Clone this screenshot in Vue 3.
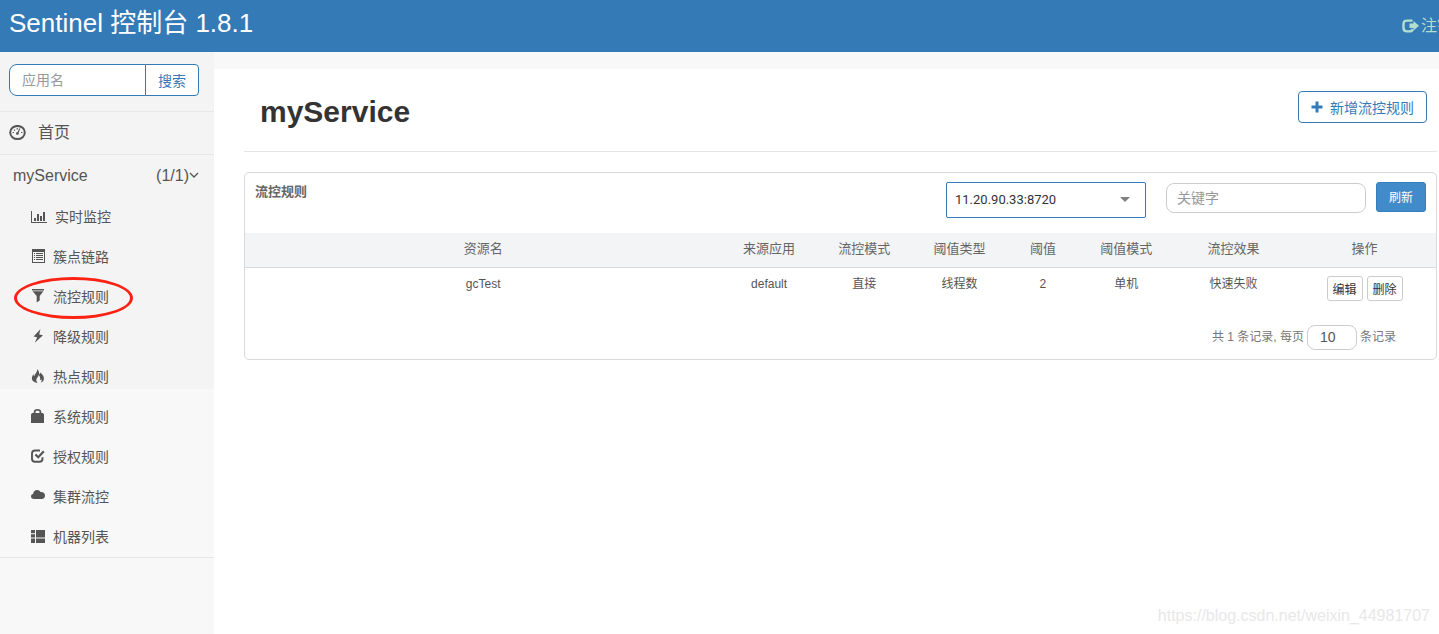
<script setup>
import { ref } from 'vue'

const menu = [
  { icon: 'chart', label: '实时监控' },
  { icon: 'list', label: '簇点链路' },
  { icon: 'filter', label: '流控规则', marked: true },
  { icon: 'flash', label: '降级规则' },
  { icon: 'fire', label: '热点规则' },
  { icon: 'lock', label: '系统规则' },
  { icon: 'check', label: '授权规则' },
  { icon: 'cloud', label: '集群流控' },
  { icon: 'machines', label: '机器列表' }
]

const columns = ['资源名', '来源应用', '流控模式', '阈值类型', '阈值', '阈值模式', '流控效果', '操作']
const rules = [['gcTest', 'default', '直接', '线程数', '2', '单机', '快速失败']]

const appName = ref('')
const keyword = ref('')
const machine = ref('11.20.90.33:8720')
const pageSize = ref('10')
</script>

<template>
  <div class="page">
    <header class="topbar">
      <h1 class="brand">Sentinel 控制台 1.8.1</h1>
      <a class="logout" href="#">
        <svg width="17" height="14" viewBox="0 0 17 14" aria-hidden="true">
          <path d="M10.500 1.600H5C2.700 1.600 1.500 2.700 1.500 4.900v4.200c0 2.200 1.200 3.300 3.500 3.300h2.500c1.900 0 3-.8 3.200-2.400" fill="none" stroke="currentColor" stroke-width="2.400" />
          <path d="M11.500 2L17 6.700l-5.500 4.700V9H7.500V4.500h4z" fill="currentColor" />
        </svg>
        <span>注销</span>
      </a>
    </header>

    <div class="body">
      <aside class="sidebar">
        <form class="search" @submit.prevent>
          <input v-model="appName" class="search-input" type="text" placeholder="应用名" aria-label="应用名" />
          <button class="search-btn" type="submit">搜索</button>
        </form>
        <a class="home" href="#">
          <svg width="17" height="16" viewBox="0 0 17 16" aria-hidden="true">
            <ellipse cx="8.500" cy="7.500" rx="7.300" ry="6.600" fill="none" stroke="currentColor" stroke-width="2" />
            <path d="M8.100 9.400L10.800 3.600M3.600 7.500h1.400M12 7.500h1.400M5 4.600l1 1M8.200 3v1.400" stroke="currentColor" stroke-width="1.100" />
            <circle cx="8.400" cy="8.400" r="1.300" fill="currentColor" />
          </svg>
          <span>首页</span>
        </a>
        <a class="app" href="#">
          <span>myService</span>
          <span class="count">(1/1)
            <svg width="10" height="9" viewBox="0 0 10 9" aria-hidden="true"><path d="M1 1l4 4 4-4" fill="none" stroke="currentColor" stroke-width="1.300" /></svg>
          </span>
        </a>
        <nav>
          <ul class="menu">
            <li v-for="m in menu" :key="m.label">
              <a href="#" class="item">
                <svg v-if="m.icon === 'chart'" width="16" height="14" viewBox="0 0 16 14" fill="currentColor"><path d="M0 1h1v11h15v1H0zM3 8h2v3H3zM6 4h2v7H6zM9 6h2v5H9zM12 2h2v9h-2z" /></svg>
                <svg v-else width="14" height="16" viewBox="0 0 14 16" fill="currentColor">
                  <path v-if="m.icon === 'list'" fill-rule="evenodd" d="M1 0h13v14H1zM2 3v10h11V3zM3 4h1v1H3zM5 4h7v1H5zM3 6h1v1H3zM5 6h7v1H5zM3 8h1v1H3zM5 8h7v1H5zM3 10h1v1H3zM5 10h7v1H5z" />
                  <path v-else-if="m.icon === 'filter'" d="M1 0h12v1.500H1zM1.600 2.300h10.800L8.700 7v4.600L5.700 13.600V7z" />
                  <path v-else-if="m.icon === 'flash'" d="M9.400.3L2.600 7.500l3.600.7L3.800 13.800l8.200-7.500-3.800-.8z" />
                  <path v-else-if="m.icon === 'fire'" d="M6.200 0c1.500 1.800 2.300 3.600 1.900 5.400.8-.4 1-1 .9-2 2.400 1.500 4 3.700 3.900 6.100 0 2-1.200 3.600-3.300 4.300 1-1.200 1.300-2.400.8-3.900-.3.800-.8 1.100-1.400 1.200.6-2.200-.1-3.800-1.500-5-.1 2.200-2.200 2.900-2.200 5 0 1.100.5 1.900 1.300 2.700C3.700 13.500 1 12.200.9 9.500.8 7.800 1.700 6.500 2.500 5c.1 1.200.3 1.900.9 2.300C3.700 4.700 6.700 3.200 6.200 0z" />
                  <path v-else-if="m.icon === 'lock'" fill-rule="evenodd" d="M2.700 4V3C2.700 1 4.200 0 6.500 0s3.800 1 3.800 3v1h1.500L13 5.200V14H0V5.200L1.200 4zM4.500 4h4V3.200c0-1.100-.7-1.500-2-1.500s-2 .4-2 1.500z" />
                  <template v-else-if="m.icon === 'check'">
                    <path d="M9 1.500H4C2 1.500 1 2.500 1 4.500v5.200c0 2 1 3 3 3h4.500c2 0 3-1 3-3V8.200" fill="none" stroke="currentColor" stroke-width="1.900" />
                    <path d="M3.600 6.200l1.600-1.500 2 2L12 1.500 13.600 3 7.300 9.800z" />
                  </template>
                  <path v-else-if="m.icon === 'cloud'" d="M3 10C1 10 0 8.900 0 7.500 0 6.100.9 5.200 2.100 5 2.200 2.700 3.800 1 6 1c1.700 0 2.900.8 3.600 2.100C12 2.700 14 4.200 14 6.600 14 8.700 12.700 10 10.800 10z" />
                  <path v-else d="M0 1h4v3.300H0zM5 1h9v7.600H5zM0 5.300h4v3.300H0zM0 9.600h4V14H0zM5 9.600h9V14H5z" />
                </svg>
                <span>{{ m.label }}</span>
                <i v-if="m.marked" class="ring"></i>
              </a>
            </li>
          </ul>
        </nav>
      </aside>

      <main class="main">
        <div class="heading">
          <h2>myService</h2>
          <button class="add" type="button">
            <svg width="12" height="12" viewBox="0 0 12 12" fill="currentColor" aria-hidden="true"><path d="M4.500.5h3v4h4v3h-4v4h-3v-4h-4v-3h4z" /></svg>
            <span>新增流控规则</span>
          </button>
        </div>

        <section class="panel">
          <div class="tools">
            <h3>流控规则</h3>
            <div class="picker">
              <select v-model="machine" aria-label="机器">
                <option>11.20.90.33:8720</option>
              </select>
              <i class="caret"></i>
            </div>
            <input v-model="keyword" class="keyword" type="text" placeholder="关键字" aria-label="关键字" />
            <button class="refresh" type="button">刷新</button>
          </div>

          <table>
            <colgroup>
              <col class="c40" /><col class="c8" /><col class="c8" /><col class="c8" /><col class="c6" /><col class="c8" /><col class="c10" /><col class="c12" />
            </colgroup>
            <thead>
              <tr><th v-for="c in columns" :key="c" scope="col">{{ c }}</th></tr>
            </thead>
            <tbody>
              <tr v-for="r in rules" :key="r[0]">
                <td v-for="(v, i) in r" :key="i">{{ v }}</td>
                <td>
                  <div class="ops">
                    <button type="button">编辑</button>
                    <button type="button">删除</button>
                  </div>
                </td>
              </tr>
            </tbody>
          </table>

          <div class="pager">
            <label for="page-size">共 1 条记录, 每页</label>
            <input id="page-size" v-model="pageSize" type="text" />
            <span>条记录</span>
          </div>
        </section>
      </main>
    </div>
    <div class="watermark">https://blog.csdn.net/weixin_44981707</div>
  </div>
</template>

<style>
body {
  margin: 0;
  background: #fff;
}
</style>

<style scoped>
* {
  box-sizing: border-box;
}
.page {
  position: relative;
  display: flex;
  flex-direction: column;
  min-height: 100vh;
  overflow: hidden;
  font-family: "Liberation Sans", "Noto Sans CJK SC", sans-serif;
  font-size: 14px;
  line-height: 20px;
  color: #555;
}
button,
input,
select {
  font-family: inherit;
  margin: 0;
}
a {
  color: inherit;
  text-decoration: none;
}
svg {
  display: block;
  flex: none;
}
.topbar {
  display: flex;
  justify-content: space-between;
  align-items: center;
  height: 52px;
  padding-left: 9px;
  background: #337ab7;
  color: #fff;
}
.brand {
  margin: 0;
  padding-bottom: 6px;
  font-size: 26px;
  line-height: 32px;
  font-weight: 400;
  white-space: nowrap;
}
.logout {
  display: flex;
  align-items: center;
  gap: 2px;
  margin-right: -14px;
  font-size: 16px;
  color: #b3dfcf;
  white-space: nowrap;
}
.body {
  flex: 1;
  display: flex;
}
.sidebar {
  flex: none;
  width: 214px;
  background: linear-gradient(#f4f4f4 337px, #f8f8f8 337px);
}
.search {
  display: flex;
  padding: 12px 15px 15px 9px;
}
.search-input {
  flex: 1;
  min-width: 0;
  height: 32px;
  padding: 0 12px;
  border: 1px solid #337ab7;
  border-radius: 8px 0 0 8px;
  background: #fff;
  font-size: 14px;
  color: #555;
  outline: none;
}
input::placeholder {
  color: #999;
  opacity: 1;
}
.search-btn {
  width: 54px;
  height: 32px;
  margin-left: -1px;
  padding: 0;
  border: 1px solid #337ab7;
  border-radius: 0 4px 4px 0;
  background: #fff;
  font-size: 14px;
  color: #337ab7;
}
.home {
  display: flex;
  align-items: center;
  gap: 12px;
  height: 43px;
  padding-left: 9px;
  border-top: 1px solid #e7e7e7;
  font-size: 16px;
}
.app {
  display: flex;
  justify-content: space-between;
  align-items: center;
  height: 43px;
  padding: 0 15px 0 13px;
  border-top: 1px solid #e7e7e7;
  font-size: 16px;
}
.count {
  display: flex;
  align-items: center;
}
.menu {
  margin: 0;
  padding: 0;
  list-style: none;
  border-bottom: 1px solid #e7e7e7;
}
.item {
  position: relative;
  display: flex;
  align-items: center;
  gap: 8px;
  height: 40px;
  padding-left: 31px;
}
.ring {
  position: absolute;
  left: 14px;
  top: 0;
  width: 119px;
  height: 42px;
  border: 3px solid #fb2213;
  border-radius: 50%;
}
.main {
  flex: 1;
  min-width: 0;
  padding: 0 2px 0 30px;
  border-top: 17px solid #f8f8f8;
}
.heading {
  display: flex;
  justify-content: space-between;
  align-items: center;
  height: 83px;
  padding: 0 10px 7px 16px;
  border-bottom: 1px solid #e4e4e4;
}
.heading h2 {
  margin: 0;
  padding-top: 10px;
  font-size: 30px;
  line-height: 36px;
  color: #333;
}
.add {
  display: flex;
  justify-content: center;
  align-items: center;
  gap: 7px;
  height: 32px;
  padding: 0 12px;
  border: 1px solid #337ab7;
  border-radius: 4px;
  background: #fff;
  font-size: 14px;
  color: #337ab7;
}
.panel {
  margin-top: 20px;
  border: 1px solid #d9d9d9;
  border-radius: 5px;
}
.tools {
  display: flex;
  align-items: flex-start;
  height: 60px;
  padding: 9px 10px 0;
}
.tools h3 {
  flex: 1;
  margin: 0;
  font-size: 13px;
  line-height: 20px;
  color: #666;
}
.picker {
  position: relative;
  width: 200px;
  margin-right: 20px;
}
.picker select {
  display: block;
  width: 100%;
  height: 36px;
  padding: 0 8px 2px;
  appearance: none;
  border: 1px solid #337ab7;
  border-radius: 2px;
  background: #fff;
  font-family: Roboto, sans-serif;
  font-size: 13px;
  color: #333;
}
.caret {
  position: absolute;
  right: 16px;
  top: 15px;
  border: 5px solid transparent;
  border-top-color: #808080;
  border-bottom: 0;
}
.keyword {
  width: 200px;
  height: 30px;
  margin: 1px 10px 0 0;
  padding: 0 10px;
  border: 1px solid #ccc;
  border-radius: 8px;
  font-size: 14px;
  outline: none;
}
.refresh {
  width: 50px;
  height: 30px;
  padding: 0 0 2px;
  border: 1px solid #357ebd;
  border-radius: 3px;
  background: #428bca;
  font-size: 12px;
  color: #fff;
}
table {
  width: 100%;
  table-layout: fixed;
  border-collapse: collapse;
}
.c40 { width: 40%; }
.c12 { width: 12%; }
.c10 { width: 10%; }
.c8 { width: 8%; }
.c6 { width: 6%; }
th {
  height: 34px;
  padding: 0 0 2px;
  border-bottom: 1px solid #d9dbde;
  background: #f3f4f6;
  font-size: 13px;
  font-weight: 400;
  color: #666;
}
td {
  padding: 6px 0 0;
  font-size: 12px;
  text-align: center;
  vertical-align: top;
  color: #555;
}
.ops {
  display: flex;
  justify-content: center;
  gap: 4px;
  padding-top: 2px;
}
.ops button {
  width: 36px;
  height: 25px;
  padding: 0;
  border: 1px solid #ccc;
  border-radius: 3px;
  background: #fff;
  font-size: 12px;
  color: #333;
}
.pager {
  display: flex;
  justify-content: flex-end;
  align-items: center;
  gap: 3px;
  padding: 24px 40px 9px 0;
  font-size: 12px;
  color: #777;
}
.pager input {
  width: 50px;
  height: 25px;
  padding: 0 12px;
  border: 1px solid #ccc;
  border-radius: 8px;
  font-size: 14px;
  color: #555;
}
.watermark {
  position: absolute;
  right: 9px;
  bottom: 8px;
  font-size: 16px;
  color: #e8e8e8;
}
</style>
